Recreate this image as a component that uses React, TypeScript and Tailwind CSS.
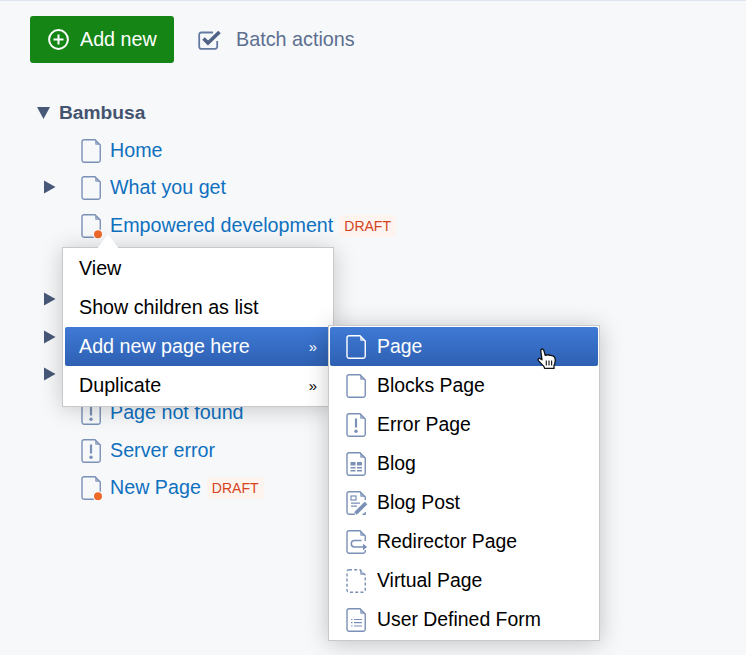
import React from "react";

type Kind = "page" | "error" | "blog" | "post" | "redirect" | "virtual" | "form" | "draft";

function DocIcon({ kind = "page", color = "#7a90b6" }: { kind?: Kind; color?: string }) {
  const outline = "M3 .75H14L19.25 6V21.5A2 2 0 0 1 17.25 23.25H3A2 2 0 0 1 1 21.5V2.75A2 2 0 0 1 3 .75Z";
  const fold = <path d="M14 .75L19.25 6H15.6A1.6 1.6 0 0 1 14 4.4Z" fill={color} stroke="none" opacity="0.7" />;
  return (
    <svg width="21" height="24" viewBox="0 0 21 24" fill="none" stroke={color} strokeWidth="1.4" className="shrink-0 overflow-visible">
      {kind === "virtual" ? (
        <path d={outline} strokeDasharray="3 2.2" />
      ) : kind === "post" ? (
        <path d="M9 23.25H3A2 2 0 0 1 1 21.5V2.75A2 2 0 0 1 3 .75H14L19.25 6V9" />
      ) : (
        <path d={outline} />
      )}
      {fold}
      {kind === "error" && (
        <>
          <path d="M10 5.5V14.5" strokeWidth="2.2" />
          <circle cx="10" cy="18.3" r="1.7" fill={color} stroke="none" />
        </>
      )}
      {kind === "blog" && (
        <g fill={color} stroke="none">
          <rect x="4.5" y="10" width="5" height="3.5" />
          <rect x="11" y="10" width="5" height="3.5" />
          <rect x="4.5" y="15" width="5" height="1.5" />
          <rect x="11" y="15" width="5" height="1.5" />
          <rect x="4.5" y="18" width="5" height="1.5" />
          <rect x="11" y="18" width="5" height="1.5" />
        </g>
      )}
      {kind === "post" && (
        <>
          <rect x="5" y="5" width="5" height="4" strokeWidth="1.2" />
          <path d="M5 12.2H14M5 15.2H11" strokeWidth="1.3" />
          <path d="M9.5 22.5L20 12" strokeWidth="3.8" />
          <path d="M16.5 23.25H19.2V21" strokeWidth="1.3" />
        </>
      )}
      {kind === "redirect" && (
        <>
          <rect x="17" y="11" width="5" height="9" fill="#fff" stroke="none" />
          <path d="M17.5 17H8.5A3.2 3.2 0 0 1 8.5 10.6H15.5" strokeWidth="1.5" />
          <path d="M17 13.8L21.2 17L17 20.2Z" fill={color} stroke="none" />
        </>
      )}
      {kind === "form" && (
        <path d="M5 11.5H6.5M8 11.5H16M5 14.7H6.5M8 14.7H16M5 18H6.5M8 18H16" strokeWidth="1.2" />
      )}
      {kind === "draft" && (
        <circle cx="17" cy="20.3" r="4.6" fill="#ee6a2b" stroke="#fff" strokeWidth="1.2" />
      )}
    </svg>
  );
}

function Triangle() {
  return (
    <svg width="12" height="14" viewBox="0 0 12 14" className="mb-[3px] shrink-0">
      <path d="M0 .5L11.5 7L0 13.5Z" fill="#475878" />
    </svg>
  );
}

function Draft() {
  return (
    <span className="ml-[6px] flex h-[22px] items-center rounded-[3px] bg-[#fdf4ef] px-[5px] text-[14px] text-[#d5421d]">
      DRAFT
    </span>
  );
}

function Row({
  label,
  kind = "page",
  arrow,
  draft,
}: {
  label?: string;
  kind?: Kind;
  arrow?: boolean;
  draft?: boolean;
}) {
  return (
    <div className="flex h-[37.5px] items-center">
      <div className="flex w-[81px] justify-start pl-[44px]">{arrow && <Triangle />}</div>
      <DocIcon kind={draft ? "draft" : kind} />
      {label && <span className="ml-[8px] text-[#0f70bf]">{label}</span>}
      {draft && <Draft />}
    </div>
  );
}

const active = "bg-gradient-to-b from-[#3f7ad6] to-[#2e60b2] text-white";

function Cursor() {
  return (
    <svg
      width="20"
      height="22"
      viewBox="0 0 20 22"
      className="absolute left-[207px] top-[21px]"
    >
      <path
        d="M4.2 1.6C5 .6 6.4 1 6.8 2.2L8.2 7.4C10 6.6 12 6.7 13.2 7.4C15 7.3 16.6 7.9 17.6 9.2C18.6 11.5 18.2 15 17 17.6V20.4H7.6L7 18.6L1.4 12.6C.6 11.4 1.6 9.8 3.2 10.6L5 11.8L3.8 3.4C3.7 2.6 3.9 2 4.2 1.6Z"
        fill="#fff"
        stroke="#111"
        strokeWidth="1.3"
        strokeLinejoin="round"
      />
      <path d="M9.3 12.5V17.5M12 12.5V17.5M14.6 12.5V17.5" stroke="#222" strokeWidth="1.2" />
    </svg>
  );
}

const subItems: { label: string; kind: Kind }[] = [
  { label: "Page", kind: "page" },
  { label: "Blocks Page", kind: "page" },
  { label: "Error Page", kind: "error" },
  { label: "Blog", kind: "blog" },
  { label: "Blog Post", kind: "post" },
  { label: "Redirector Page", kind: "redirect" },
  { label: "Virtual Page", kind: "virtual" },
  { label: "User Defined Form", kind: "form" },
];

const mainItems = [
  { label: "View" },
  { label: "Show children as list" },
  { label: "Add new page here", more: true, on: true },
  { label: "Duplicate", more: true },
];

export default function App() {
  return (
    <div className="relative h-[655px] w-[746px] overflow-hidden border-t border-[#dfe5ef] bg-[#f7f8fa] font-['Liberation_Sans',Arial,sans-serif] text-[19.7px] leading-none">
      <div className="flex items-center pl-[30px] pt-[15px]">
        <button className="flex h-[47px] w-[144px] items-center rounded-[3px] bg-[#158616] pl-[18px] text-white">
          <svg width="21" height="21" viewBox="0 0 21 21" fill="none" stroke="#fff" strokeWidth="2">
            <circle cx="10.5" cy="10.5" r="9.4" />
            <path d="M10.5 5.5V15.5M5.5 10.5H15.5" />
          </svg>
          <span className="ml-[11px]">Add new</span>
        </button>
        <svg width="24" height="20" viewBox="0 0 24 20" fill="none" className="ml-[24px]">
          <path d="M15 2.5H3.5A2 2 0 0 0 1.2 4.5V16.5A2 2 0 0 0 3.5 18.8H17A2 2 0 0 0 19.2 16.5V11" stroke="#64799f" strokeWidth="1.8" />
          <path d="M5.5 8.5L10 13L21.5 2" stroke="#4f6285" strokeWidth="3.6" />
        </svg>
        <span className="ml-[14px] text-[19.8px] text-[#5c6f90]">Batch actions</span>
      </div>

      <div className="mt-[31px] pl-[37px]">
        <div className="flex h-[37px] items-center text-[19.2px] font-bold text-[#44546f]">
          <svg width="13" height="12" viewBox="0 0 13 12" className="shrink-0">
            <path d="M0 0H13L6.5 12Z" fill="#475878" />
          </svg>
          <span className="ml-[9px]">Bambusa</span>
        </div>
      </div>
      <div className="flex flex-col pt-[0.9px]">
        <Row label="Home" />
        <Row label="What you get" arrow />
        <Row label="Empowered development" draft />
        <Row />
        <Row arrow />
        <Row arrow />
        <Row arrow />
        <Row label="Page not found" kind="error" />
        <Row label="Server error" kind="error" />
        <Row label="New Page" draft />
      </div>

      <div className="absolute left-[62px] top-[246px] w-[272px] border border-[#c9c9c9] bg-white p-[2px] pt-[1px] pb-[1px] text-black shadow-[0_2px_22px_rgba(0,0,0,0.2)]">
        <svg width="22" height="15" viewBox="0 0 22 15" className="absolute -top-[14px] left-[34px]">
          <path d="M0 15L11 0L22 15Z" fill="#fff" />
        </svg>
        {mainItems.map((it) => (
          <div
            key={it.label}
            className={`flex h-[39px] items-center justify-between rounded-[2px] pl-[14px] pr-[14px] ${it.on ? active : ""}`}
          >
            <span>{it.label}</span>
            {it.more && <span className="text-[15px]">»</span>}
          </div>
        ))}
      </div>

      <div className="absolute left-[328px] top-[324px] w-[272px] border border-[#c9c9c9] bg-white p-[1px] text-[19.4px] text-black shadow-[0_2px_22px_rgba(0,0,0,0.22)]">
        {subItems.map((it, i) => (
          <div
            key={it.label}
            className={`relative flex h-[39px] items-center rounded-[2px] pl-[16px] ${i === 0 ? active : ""}`}
          >
            <DocIcon kind={it.kind} color={i === 0 ? "#ffffff" : "#7a90b6"} />
            <span className="ml-[10px]">{it.label}</span>
            {i === 0 && <Cursor />}
          </div>
        ))}
      </div>
    </div>
  );
}
